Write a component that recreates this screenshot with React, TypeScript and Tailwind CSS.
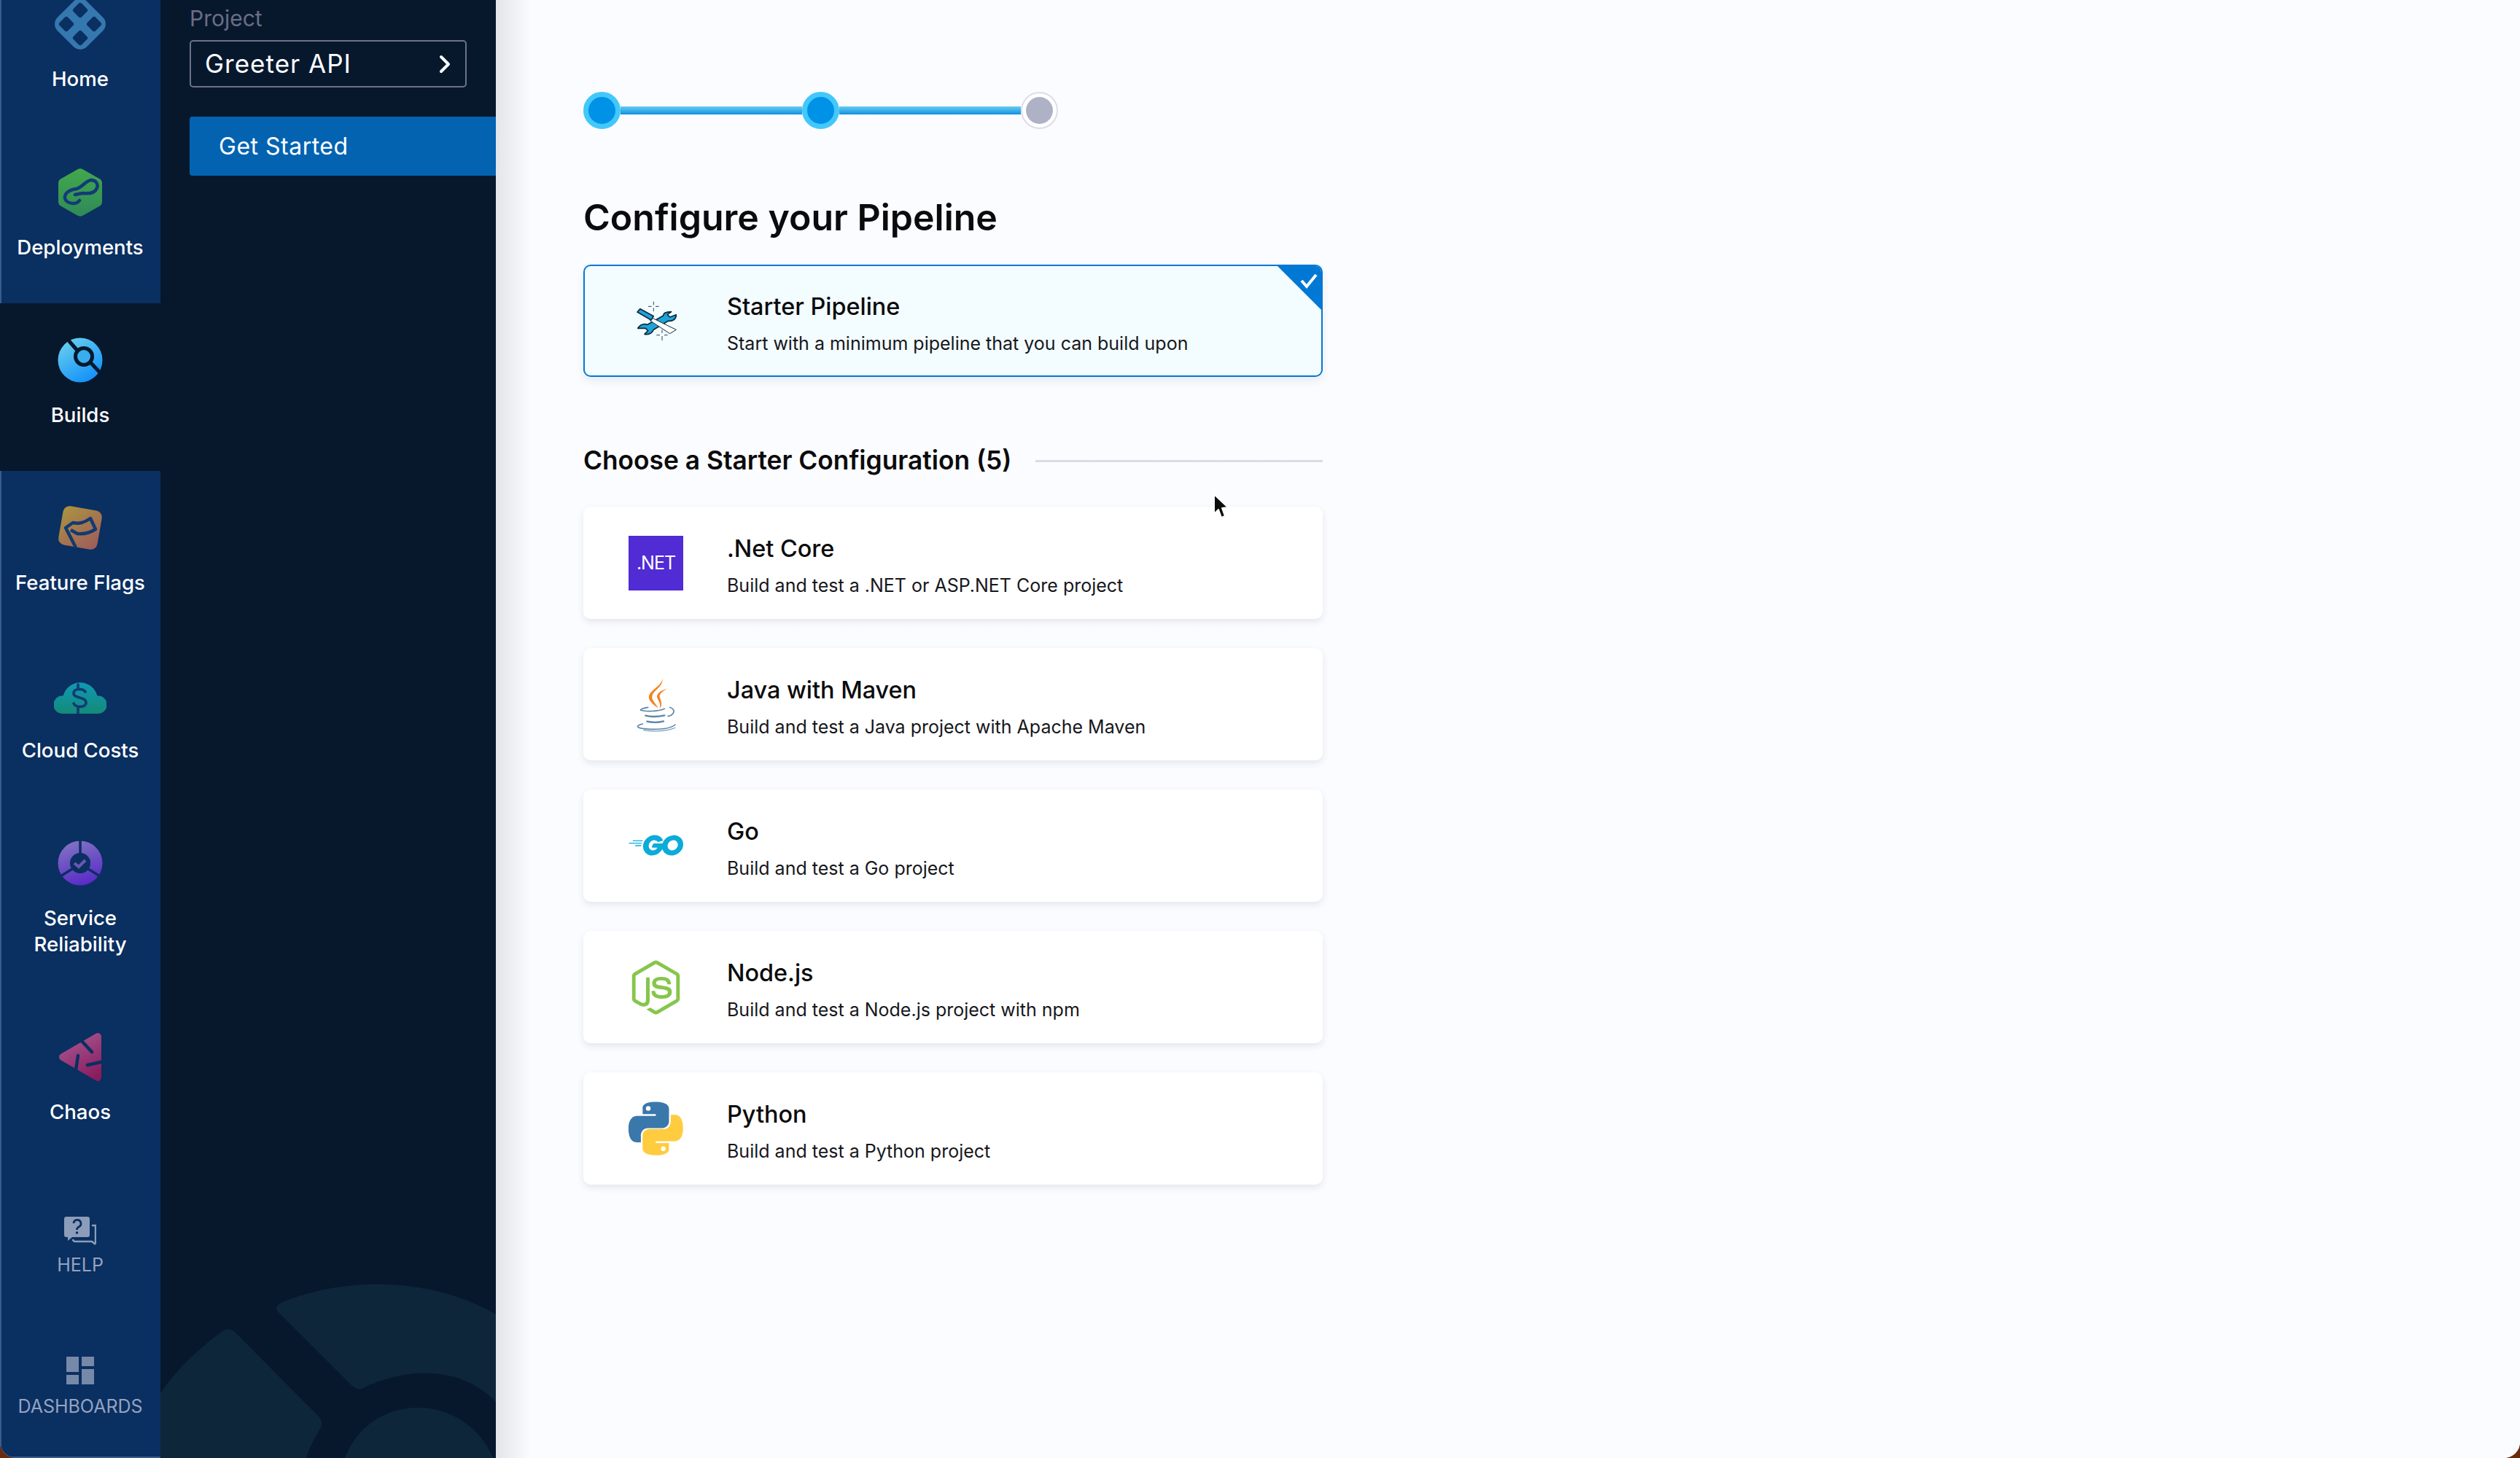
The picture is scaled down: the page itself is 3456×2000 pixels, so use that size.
import { FaGolang, FaNodeJs } from "react-icons/fa6";

const font = "font-['Inter',sans-serif]";

const NAV = [
    { label: "Deployments", icon: <DeployIcon /> },
    { label: "Builds", icon: <BuildsIcon />, active: true },
    { label: "Feature Flags", icon: <FlagIcon /> },
    { label: "Cloud Costs", icon: <CloudIcon /> },
];

const STARTERS = [
    { title: ".Net Core", desc: "Build and test a .NET or ASP.NET Core project", icon: <DotNetIcon /> },
    { title: "Java with Maven", desc: "Build and test a Java project with Apache Maven", icon: <JavaIcon /> },
    { title: "Go", desc: "Build and test a Go project", icon: <FaGolang className="w-[75px] h-[75px] text-[#0cabd9]" /> },
    { title: "Node.js", desc: "Build and test a Node.js project with npm", icon: <FaNodeJs className="w-[75px] h-[75px] text-[#86c64c]" /> },
    { title: "Python", desc: "Build and test a Python project", icon: <PythonIcon /> },
];

function HomeIcon() {
    return (
        <svg width="76" height="76" viewBox="0 0 76 76">
            <rect x="9.500" y="9.500" width="57" height="57" rx="13" transform="rotate(45 38 38)" fill="#3578af" />
            {[[38, 19], [19, 38], [57, 38], [38, 57]].map(([x, y]) => (
                <rect key={`${x}-${y}`} x={x - 8} y={y - 8} width="16" height="16" rx="3" transform={`rotate(45 ${x} ${y})`} fill="#0a2f61" />
            ))}
        </svg>
    );
}

function DeployIcon() {
    return (
        <svg width="62" height="68" viewBox="0 0 62 68">
            <defs>
                <linearGradient id="dep" x1="0" y1="0" x2="0" y2="1">
                    <stop offset="0" stopColor="#42a84c" />
                    <stop offset="1" stopColor="#2f8a58" />
                </linearGradient>
            </defs>
            <path d="M27 2.500a8 8 0 0 1 8 0l22 12.500a7 7 0 0 1 4 6.500v25a7 7 0 0 1-4 6.500l-22 12.500a8 8 0 0 1-8 0l-22-12.500a7 7 0 0 1-4-6.500v-25a7 7 0 0 1 4-6.500z" fill="url(#dep)" />
            <path d="M30 45 C25 52 12 49 10 42 C9 34 18 30 26 29 C34 27 38 18 46 17 C53 17 56 23 54 28 C51 35 42 36 34 35 L24 37" fill="none" stroke="#133a78" strokeWidth="4.500" strokeLinecap="round" />
        </svg>
    );
}

function BuildsIcon() {
    return (
        <svg width="62" height="62" viewBox="0 0 62 62">
            <defs>
                <linearGradient id="bld" x1="0" y1="0" x2="0.6" y2="1">
                    <stop offset="0" stopColor="#72d6ec" />
                    <stop offset="1" stopColor="#1593f8" />
                </linearGradient>
            </defs>
            <circle cx="31" cy="31" r="30.500" fill="url(#bld)" />
            <path d="M15 4 L29 20 M42 31 L60 50" stroke="#07182d" strokeWidth="5" />
            <circle cx="36" cy="26" r="11.500" fill="#38aef0" stroke="#07182d" strokeWidth="5" />
        </svg>
    );
}

function FlagIcon() {
    return (
        <svg width="66" height="66" viewBox="0 0 66 66">
            <defs>
                <linearGradient id="flg" x1="0" y1="0" x2="1" y2="1">
                    <stop offset="0" stopColor="#ab9440" />
                    <stop offset="1" stopColor="#9e5a5c" />
                </linearGradient>
            </defs>
            <rect x="6" y="6" width="54" height="54" rx="9" transform="rotate(10 33 33)" fill="url(#flg)" />
            <path d="M27 60 L13 33 L23 26 C32 28 38 26 47 20 L54 35 C46 40 38 42 29 41 L20 36" fill="none" stroke="#123a73" strokeWidth="4.500" strokeLinejoin="round" />
        </svg>
    );
}

function CloudIcon() {
    return (
        <svg width="72" height="50" viewBox="0 0 72 50">
            <defs>
                <linearGradient id="cld" x1="0" y1="0" x2="0" y2="1">
                    <stop offset="0" stopColor="#0f99b4" />
                    <stop offset="1" stopColor="#148a78" />
                </linearGradient>
            </defs>
            <path d="M12 50a12 12 0 0 1-1-24.500 a2 2 0 0 0 2-1a24 24 0 0 1 46 0a2 2 0 0 0 2 1a12 12 0 0 1-1 24.500z" fill="url(#cld)" />
            <path d="M43 20 C40 15 27 15 27 22 C27 30 44 26 44 35 C44 42 30 42 27 36 M33 10 V16 M33 42 V50" fill="none" stroke="#123a73" strokeWidth="3.600" strokeLinecap="round" />
        </svg>
    );
}

function ReliabilityIcon() {
    return (
        <svg width="62" height="62" viewBox="0 0 62 62">
            <defs>
                <linearGradient id="rel" x1="0.2" y1="0" x2="0.5" y2="1">
                    <stop offset="0" stopColor="#8175c2" />
                    <stop offset="1" stopColor="#5a2cc6" />
                </linearGradient>
            </defs>
            <circle cx="31" cy="31" r="30.500" fill="url(#rel)" />
            <circle cx="31" cy="31" r="14" fill="#0a2f61" />
            <path d="M31 0 V18 M4 49 L20 39 M58 49 L42 39" stroke="#0a2f61" strokeWidth="3.500" />
            <path d="M23 31 L29 36 L38 27" fill="none" stroke="#6a57b8" strokeWidth="4" />
        </svg>
    );
}

function ChaosIcon() {
    return (
        <svg width="60" height="68" viewBox="0 0 60 68">
            <defs>
                <linearGradient id="cha" x1="0.2" y1="0" x2="0.7" y2="1">
                    <stop offset="0" stopColor="#a75a94" />
                    <stop offset="1" stopColor="#891c5d" />
                </linearGradient>
            </defs>
            <path d="M52 1.500a5 5 0 0 1 7 5v55a5 5 0 0 1-7 5L3 38a5 5 0 0 1 0-8z" fill="url(#cha)" />
            <path d="M32 12 L46 27 M27 32 L24 52 M40 45 L58 41" stroke="#0a2f61" strokeWidth="4.500" strokeLinecap="round" />
        </svg>
    );
}

function HelpIcon() {
    return (
        <svg width="44" height="40" viewBox="0 0 44 40">
            <path d="M3 0h29a3 3 0 0 1 3 3v22a3 3 0 0 1-3 3H11l-6 5v-5H3a3 3 0 0 1-3-3V3a3 3 0 0 1 3-3z" fill="#8c9dba" />
            <path d="M38 12 h5 v25 M43 38 l-5-4 H15 a3 3 0 0 1-3-3" fill="none" stroke="#8c9dba" strokeWidth="2.500" />
            <path d="M13 9 a5 5 0 1 1 7 5 c-2 1-2.500 2-2.500 4" fill="none" stroke="#0a2f61" strokeWidth="2.800" />
            <circle cx="17.500" cy="22" r="1.800" fill="#0a2f61" />
        </svg>
    );
}

function DashIcon() {
    return (
        <svg width="38" height="38" viewBox="0 0 38 38">
            <rect x="0" y="0" width="17" height="21" fill="#7689a8" />
            <rect x="0" y="25" width="17" height="13" fill="#7689a8" />
            <rect x="21" y="0" width="17" height="13" fill="#7689a8" />
            <rect x="21" y="17" width="17" height="21" fill="#7689a8" />
        </svg>
    );
}

function ToolsIcon() {
    return (
        <svg width="75" height="75" viewBox="68 38 225 225">
            <path d="M165 70v14M165 96v14M143 90h14M173 90h14M200 186v14M200 212v18M177 208h14M209 208h14" stroke="#33414d" strokeWidth="3" fill="none" />
            <path d="M100 180 C110 165 125 160 140 165 L205 128 C205 120 215 112 238 112 L222 124 L232 134 L258 124 C258 142 245 152 225 150 L165 186 C160 200 145 207 128 204 L142 190 L132 180 Z" fill="#1fa3da" stroke="#0d2a3c" strokeWidth="5" strokeLinejoin="round" />
            <path d="M160 138 L258 186 L232 202 L150 148 Z" fill="#fff" stroke="#0d2a3c" strokeWidth="3" strokeLinejoin="round" />
            <path d="M98 113 L110 100 L165 130 L155 146 Z" fill="#1fa3da" stroke="#0d2a3c" strokeWidth="5" strokeLinejoin="round" />
        </svg>
    );
}

function DotNetIcon() {
    return (
        <div className="w-[75px] h-[75px] bg-[#512bd4] flex items-center justify-center pt-[2px] text-white text-[25px] font-normal tracking-[-1px]">
            .NET
        </div>
    );
}

function JavaIcon() {
    return (
        <svg width="55" height="75" viewBox="0 0 165 225">
            <path d="M107 0 C118 30 60 50 54 78 C50 100 78 115 92 128 C84 108 62 95 68 75 C75 50 120 35 107 0Z" fill="#f5821f" />
            <path d="M128 47 C100 55 82 70 88 85 C94 100 104 110 98 130 C114 110 100 92 98 80 C97 68 110 58 128 47Z" fill="#f5821f" />
            <g fill="none" stroke="#5a86a8" strokeLinecap="round">
                <path d="M20 135 C40 142 90 142 118 130" strokeWidth="5" />
                <path d="M20 135 C22 128 40 126 50 124" strokeWidth="5" />
                <path d="M132 160 C150 160 172 135 140 124" strokeWidth="5" />
                <path d="M40 158 C60 163 90 163 118 157" strokeWidth="7" />
                <path d="M46 182 C70 187 95 186 114 181" strokeWidth="7" />
                <path d="M28 192 C-5 200 0 212 60 214 C100 215 145 210 162 195" strokeWidth="5" />
                <path d="M32 218 C70 226 130 222 162 208" strokeWidth="3" />
            </g>
        </svg>
    );
}

function PythonIcon() {
    return (
        <svg width="75" height="75" viewBox="0 0 111 111">
            <path fillRule="evenodd" d="M54.900.9C26.800.9 28.600 13 28.600 13v12.600H55.400v3.800H17.900S-.1 27.300-.1 55.600 15.600 82.800 15.600 82.800h9.400V69.700s-.5-15.700 15.500-15.700h26.600s15 .2 15-14.500V15.200S84.400.9 54.900.9zM40 9.400a4.800 4.800 0 1 1 0 9.600 4.800 4.800 0 0 1 0-9.600z" fill="#3a77ab" />
            <path fillRule="evenodd" d="M55.700 109.100c28.100 0 26.300-12.200 26.300-12.200V84.300H55.200v-3.800h37.500s18 2 18-26.200-15.700-27.200-15.700-27.200h-9.400v13.100s.5 15.700-15.500 15.700H43.500s-15-.2-15 14.500v24.300s-2.300 14.400 27.200 14.400zm14.800-8.500a4.800 4.800 0 1 1 0-9.600 4.800 4.800 0 0 1 0 9.600z" fill="#ffcb3f" />
        </svg>
    );
}

function NavItem({ label, icon, active, tall }: { label: string; icon: React.ReactNode; active?: boolean; tall?: boolean }) {
    return (
        <div className={`${tall ? "h-[266px]" : "h-[230px]"} shrink-0 flex flex-col items-center pt-[45px] ${active ? "bg-[#07182d]" : ""}`}>
            <div className="h-[66px] flex items-center justify-center">{icon}</div>
            <span className="mt-[24px] px-[4px] text-[27.6px] leading-[36px] font-medium text-white text-center">{label}</span>
        </div>
    );
}

function StepDot() {
    return <div className="w-[51px] h-[51px] rounded-full bg-[#0092e6] border-[7px] border-[#42c8fb] shrink-0" />;
}

function StepLine() {
    return <div className="w-[249px] h-[11px] bg-gradient-to-b from-[#62cff0] to-[#0c8ee0]" />;
}

function ConfigCard({ title, desc, icon, selected }: { title: string; desc: string; icon: React.ReactNode; selected?: boolean }) {
    return (
        <div className={`relative h-[154px] w-[1014px] rounded-[10px] flex items-center pl-[62px] overflow-hidden ${selected ? "bg-[#f3fcff] border-2 border-[#0278d5] shadow-[0_6px_12px_rgba(30,40,80,0.08)]" : "bg-white shadow-[0_4px_10px_rgba(30,40,80,0.1)]"}`}>
            <div className="w-[75px] h-[75px] shrink-0 flex items-center justify-center">{icon}</div>
            <div className={`${selected ? "ml-[58px]" : "ml-[60px]"} pt-[9px] flex flex-col`}>
                <span className="text-[32.400px] leading-[40px] font-medium text-[#0b0b0d]">{title}</span>
                <span className="mt-[12px] text-[25px] leading-[36px] text-[#17171c]">{desc}</span>
            </div>
            {selected && (
                <svg className="absolute top-[-2px] right-[-2px]" width="66" height="66" viewBox="0 0 66 66">
                    <path d="M2 0H66V64Z" fill="#0278d5" />
                    <path d="M37 22 L44 30 L57 14" fill="none" stroke="#fff" strokeWidth="4" />
                </svg>
            )}
        </div>
    );
}

export default function App() {
    return (
        <div className={`${font} w-[3456px] h-[2000px] bg-[#6a2a0e]`}>
            <div className="w-full h-full flex overflow-hidden rounded-b-[22px] bg-[#fbfcff]">
                <aside className="w-[220px] shrink-0 bg-[#0a2f61] shadow-[inset_2px_-2px_0_#3a5c8c] flex flex-col overflow-hidden">
                    <div className="h-[230px] shrink-0 mt-[-44px] flex flex-col items-center pt-[39px]">
                        <HomeIcon />
                        <span className="mt-[19px] text-[27.6px] leading-[36px] font-medium text-white">Home</span>
                    </div>
                    {NAV.map((n) => <NavItem key={n.label} {...n} />)}
                    <NavItem label="Service Reliability" icon={<ReliabilityIcon />} tall />
                    <NavItem label="Chaos" icon={<ChaosIcon />} />
                    <div className="flex flex-col items-center mt-[67px]">
                        <HelpIcon />
                        <span className="mt-[8px] text-[25px] leading-[36px] text-[#94a3c0]">HELP</span>
                    </div>
                    <div className="flex flex-col items-center mt-[108px]">
                        <DashIcon />
                        <span className="mt-[12px] text-[25px] leading-[36px] text-[#94a3c0]">DASHBOARDS</span>
                    </div>
                </aside>

                <nav className="relative w-[460px] shrink-0 bg-[#07182d] pl-[40px] overflow-hidden">
                    <svg className="absolute left-0 bottom-0" width="460" height="240" viewBox="220 1760 460 240">
                        <path d="M388 1786 C470 1752 590 1750 680 1803 V1923 C640 1880 570 1870 500 1903 C494 1907 488 1906 482 1900 L382 1800 C376 1794 380 1790 388 1786Z" fill="#0e2639" />
                        <path d="M220 1911 C245 1875 275 1848 305 1826 C312 1822 318 1823 323 1828 L436 1942 C442 1948 442 1953 440 1958 C432 1972 424 1986 420 2000 H220Z" fill="#0e2639" />
                        <path d="M473 2000 C490 1955 530 1931 574 1931 C620 1931 660 1960 676 2000Z" fill="#0e2639" />
                    </svg>
                    <div className="relative">
                        <div className="pt-[6px] text-[30px] leading-[38px] text-[#6b6d85]">Project</div>
                        <div className="mt-[11px] w-[380px] h-[65px] rounded-[5px] border-2 border-[#6f7186] flex items-center justify-between pl-[19px] pr-[20px]">
                            <span className="text-[35px] font-normal text-white tracking-[1px]">Greeter API</span>
                            <svg width="16" height="26" viewBox="0 0 16 26">
                                <path d="M3 3 L13 13 L3 23" fill="none" stroke="#fff" strokeWidth="4" strokeLinecap="round" strokeLinejoin="round" />
                            </svg>
                        </div>
                        <div className="mt-[40px] h-[81px] rounded-l-[4px] bg-[#0363b1] flex items-center pl-[40px] text-[32px] tracking-[0.5px] text-white">
                            Get Started
                        </div>
                    </div>
                </nav>

                <main className="relative flex-1 bg-gradient-to-r from-[#e4e5ea] from-0% to-[#fbfcff] to-[48px] pl-[120px] pt-[126px]">
                    <div className="flex items-center">
                        <StepDot />
                        <StepLine />
                        <StepDot />
                        <StepLine />
                        <div className="w-[51px] h-[51px] rounded-full bg-white border-2 border-[#dcdde8] flex items-center justify-center">
                            <div className="w-[37px] h-[37px] rounded-full bg-[#afb1c7]" />
                        </div>
                    </div>
                    <h1 className="mt-[90px] text-[50px] leading-[62px] font-semibold text-[#0b0b0d]">Configure your Pipeline</h1>
                    <div className="mt-[34px]">
                        <ConfigCard title="Starter Pipeline" desc="Start with a minimum pipeline that you can build upon" icon={<ToolsIcon />} selected />
                    </div>
                    <div className="mt-[92px] w-[1014px] flex items-center gap-[33px]">
                        <h2 className="text-[35.300px] leading-[46px] font-semibold text-[#0b0b0d] whitespace-nowrap">Choose a Starter Configuration (5)</h2>
                        <div className="flex-1 h-[3px] bg-[#dadbe6]" />
                    </div>
                    <div className="mt-[40px] flex flex-col gap-[40px]">
                        {STARTERS.map((s) => <ConfigCard key={s.title} {...s} />)}
                    </div>
                    <svg className="absolute left-[982px] top-[675px]" width="26" height="38" viewBox="0 0 26 38">
                        <path d="M3 3 V30 L9 24 L13 35 L18 33 L14 22 L22 21 Z" fill="#0c0c0c" stroke="#fff" strokeWidth="2" strokeLinejoin="round" />
                    </svg>
                </main>
            </div>
        </div>
    );
}
